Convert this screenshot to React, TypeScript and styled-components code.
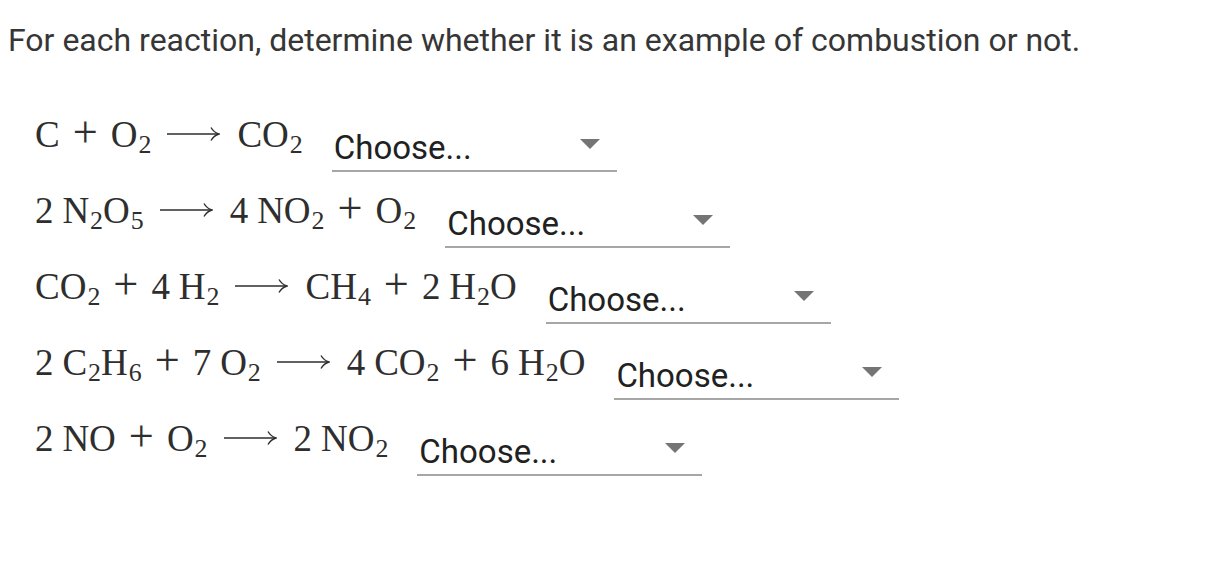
import React from "react";
import styled, { createGlobalStyle } from "styled-components";

const GlobalStyle = createGlobalStyle`
  html, body {
    margin: 0;
    padding: 0;
    background: #ffffff;
  }
  body {
    margin: 8px;
    font-family: Roboto, "Noto Sans", "Liberation Sans", sans-serif;
  }
`;

const Page = styled.main`
  display: flex;
  flex-direction: column;
`;

const Prompt = styled.p`
  margin: 14px 0 0;
  font-size: 32px;
  line-height: 1.172;
  color: #363636;
`;

const List = styled.div`
  display: flex;
  flex-direction: column;
  padding-left: 27px;
  margin-top: 36px;
`;

const Row = styled.div`
  display: flex;
  align-items: flex-end;
  height: 76px;
`;

const Formula = styled.span`
  display: inline-flex;
  align-items: baseline;
  font-family: "Liberation Serif", "Times New Roman", serif;
  font-size: 37px;
  line-height: 37px;
  color: #2e2e2e;
  margin-bottom: 15px;
  white-space: nowrap;
`;

const Coef = styled.span`
  margin-right: 0.24em;
`;

const Species = styled.span`
  display: inline-flex;
  align-items: baseline;
`;

const Sub = styled.span`
  font-size: 0.7em;
  position: relative;
  top: 6px;
  margin-left: 1px;
`;

const Plus = styled.span`
  font-size: 1.2em;
  line-height: 1;
  margin: 0 13px;
`;

const ArrowWrap = styled.span`
  display: inline-flex;
  align-self: center;
  margin: 0 17px 0 16px;
  padding-top: 2px;
`;

const Dropdown = styled.div<{ $width: number }>`
  display: flex;
  align-items: center;
  justify-content: space-between;
  box-sizing: border-box;
  width: ${(p) => p.$width}px;
  margin-left: 29px;
  padding: 0 17px 7px 2px;
  border-bottom: 2px solid #a6a6a6;
  cursor: pointer;
`;

const Value = styled.span`
  font-family: Roboto, "Noto Sans", sans-serif;
  font-size: 33px;
  line-height: 31px;
  color: #212121;
`;

const Caret = styled.span`
  width: 0;
  height: 0;
  border-left: 10px solid transparent;
  border-right: 10px solid transparent;
  border-top: 10px solid #757575;
  margin-bottom: 6px;
`;

const LongArrow = () => (
  <svg width="53" height="16" viewBox="0 0 53 16" aria-hidden="true">
    <line x1="0" y1="8" x2="51" y2="8" stroke="#2e2e2e" strokeWidth="1.4" />
    <path
      d="M44 1.5 C46 5 48.5 7 52 8 C48.5 9 46 11 44 14.5"
      fill="none"
      stroke="#2e2e2e"
      strokeWidth="1.4"
    />
  </svg>
);

function renderSpecies(s: string, key: number) {
  const parts: React.ReactNode[] = [];
  const re = /([A-Za-z]+)|_(\d+)/g;
  let m: RegExpExecArray | null;
  let i = 0;
  while ((m = re.exec(s))) {
    if (m[1]) parts.push(<span key={i++}>{m[1]}</span>);
    else parts.push(<Sub key={i++}>{m[2]}</Sub>);
  }
  return <Species key={key}>{parts}</Species>;
}

function renderFormula(expr: string) {
  return expr.split(" ").map((tok, i) => {
    if (tok === "+") return <Plus key={i}>+</Plus>;
    if (tok === "->")
      return (
        <ArrowWrap key={i}>
          <LongArrow />
        </ArrowWrap>
      );
    if (/^\d+$/.test(tok)) return <Coef key={i}>{tok}</Coef>;
    return renderSpecies(tok, i);
  });
}

const reactions = [
  "C + O_2 -> CO_2",
  "2 N_2O_5 -> 4 NO_2 + O_2",
  "CO_2 + 4 H_2 -> CH_4 + 2 H_2O",
  "2 C_2H_6 + 7 O_2 -> 4 CO_2 + 6 H_2O",
  "2 NO + O_2 -> 2 NO_2",
];

export default function App() {
  return (
    <Page>
      <GlobalStyle />
      <Prompt>
        For each reaction, determine whether it is an example of combustion or
        not.
      </Prompt>
      <List>
        {reactions.map((r) => (
          <Row key={r}>
            <Formula>{renderFormula(r)}</Formula>
            <Dropdown $width={285} role="combobox" aria-label="Choose">
              <Value>Choose...</Value>
              <Caret />
            </Dropdown>
          </Row>
        ))}
      </List>
    </Page>
  );
}
